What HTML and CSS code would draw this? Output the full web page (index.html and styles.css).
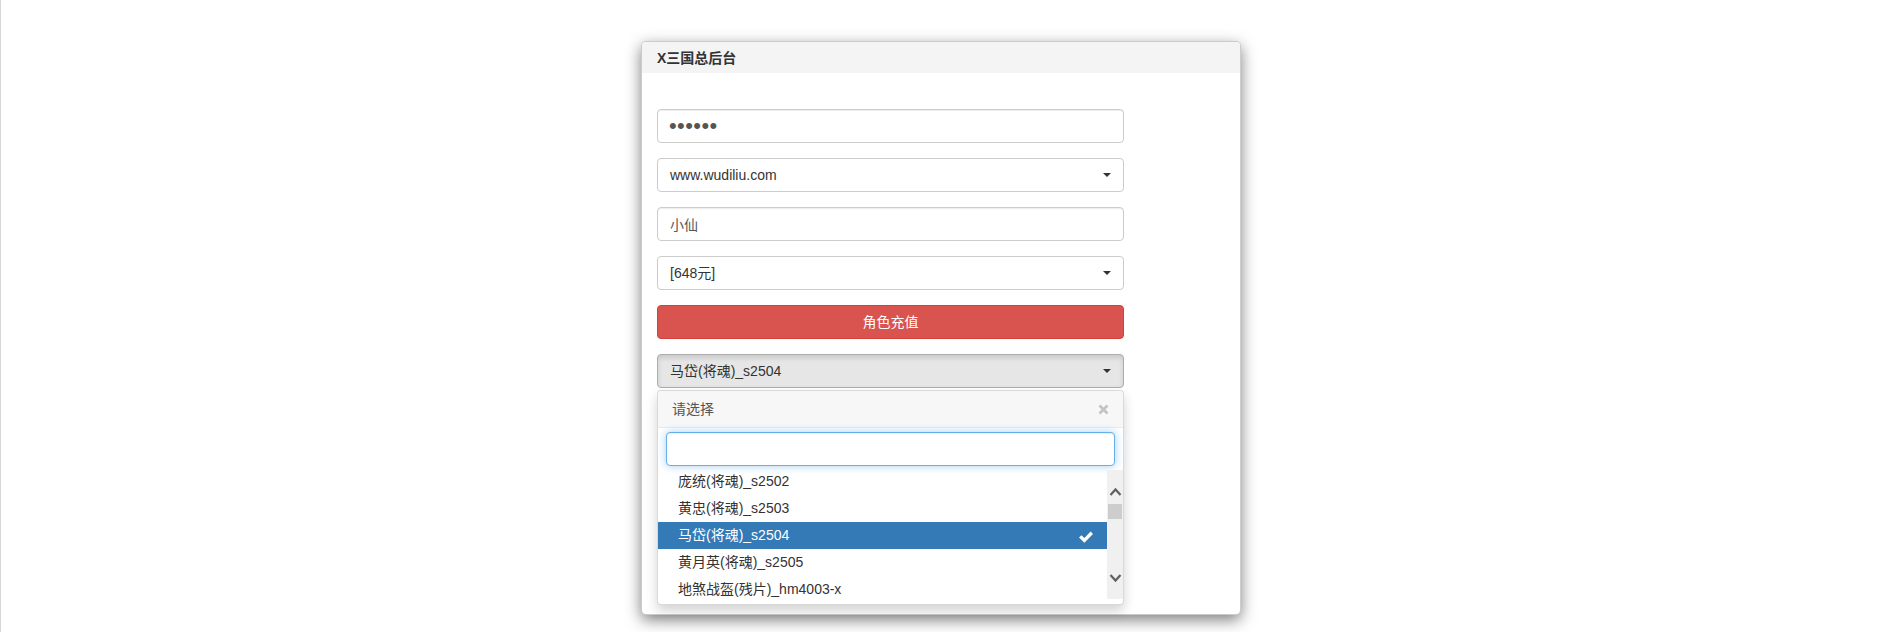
FILE: index.html
```html
<!DOCTYPE html>
<html lang="zh-CN">
<head>
<meta charset="utf-8">
<title>X三国总后台</title>
<link rel="stylesheet" href="styles.css">
</head>
<body>
<div class="panel">
  <div class="panel-heading">X三国总后台</div>
  <div class="panel-body">
    <form class="form">
      <div class="form-group"><input class="form-control pwd" type="password" value="123456"></div>
      <div class="form-group"><button type="button" class="select-btn"><span class="filter-option">www.wudiliu.com</span><span class="caret"></span></button></div>
      <div class="form-group"><input class="form-control" type="text" value="小仙"></div>
      <div class="form-group"><button type="button" class="select-btn"><span class="filter-option">[648元]</span><span class="caret"></span></button></div>
      <div class="form-group"><button type="button" class="btn btn-danger">角色充值</button></div>
      <div class="form-group select-open">
        <button type="button" class="select-btn active"><span class="filter-option">马岱(将魂)_s2504</span><span class="caret"></span></button>
        <div class="dropdown-menu">
          <div class="popover-title"><svg class="close" width="11" height="11" viewBox="0 0 11 11"><path d="M1.5 1.5 L9.5 9.5 M9.5 1.5 L1.5 9.5" stroke="#c3c3c3" stroke-width="2.6" fill="none"/></svg>请选择</div>
          <div class="bs-searchbox"><input class="form-control focused" type="text"></div>
          <div class="inner-wrap">
            <ul class="inner">
              <li class="first">庞统(将魂)_s2502</li>
              <li>黄忠(将魂)_s2503</li>
              <li class="selected">马岱(将魂)_s2504<svg class="check" width="14" height="12" viewBox="0 0 14 12"><polygon points="0,6.6 2.4,4.2 5.4,7.1 11.6,0.6 14,3 5.4,11.8" fill="#fff"/></svg></li>
              <li>黄月英(将魂)_s2505</li>
              <li>地煞战盔(残片)_hm4003-x</li>
            </ul>
            <svg class="scrollbar" width="16" height="129" viewBox="0 0 16 129">
              <rect width="16" height="129" fill="#f0f0f0"/>
              <polyline points="3.5,25 8.5,19.5 13.5,25" fill="none" stroke="#606060" stroke-width="2.2"/>
              <rect x="1" y="34" width="14" height="15" fill="#cdcdcd"/>
              <polyline points="3.5,105 8.5,110.5 13.5,105" fill="none" stroke="#606060" stroke-width="2.2"/>
            </svg>
          </div>
        </div>
      </div>
      <div class="form-group"><input class="form-control" type="text"></div>
      <div class="form-group"><button type="button" class="btn btn-primary" aria-label="查询"></button></div>
      <div class="form-group"><input class="form-control" type="text"></div>
      <div class="form-group"><button type="button" class="btn btn-primary" aria-label="提交"></button></div>
    </form>
  </div>
</div>
</body>
</html>
```

FILE: styles.css
```css
* { box-sizing: border-box; }

html, body {
  margin: 0;
  padding: 0;
  background: #fff;
}

body {
  border-left: 1px solid #d6d6d6;
  min-height: 100vh;
  overflow: hidden;
  font-family: "Liberation Sans", "Noto Sans CJK SC", sans-serif;
  font-size: 14px;
  line-height: 20px;
  color: #333;
}

.panel {
  width: 600px;
  margin: 41px auto 0;
  border: 1px solid rgba(0, 0, 0, 0.2);
  border-radius: 5px;
  background: #fff;
  box-shadow: 0 5px 15px rgba(0, 0, 0, 0.5);
}

.panel-heading {
  background: #f4f4f4;
  border-radius: 4px 4px 0 0;
  padding: 6px 15px 5px;
  font-weight: bold;
  color: #333;
}

.panel-body {
  padding: 36px 15px 15px;
}

.form { margin: 0; }

.form-group {
  width: 467px;
  margin-bottom: 15px;
  position: relative;
}

.form-control {
  display: block;
  width: 100%;
  height: 34px;
  padding: 6px 12px;
  border: 1px solid #ccc;
  border-radius: 4px;
  background: #fff;
  color: #555;
  font-family: "Liberation Sans", "Noto Sans CJK SC", sans-serif;
  font-size: 14px;
  line-height: 20px;
  box-shadow: inset 0 1px 1px rgba(0, 0, 0, 0.075);
  outline: none;
}

.form-control.pwd {
  font-size: 22px;
  letter-spacing: 0.4px;
  padding-left: 11px;
}

.select-btn {
  display: block;
  position: relative;
  width: 100%;
  height: 34px;
  padding: 6px 25px 6px 12px;
  border: 1px solid #ccc;
  border-radius: 4px;
  background: #fff;
  color: #333;
  text-align: left;
  font-family: "Liberation Sans", "Noto Sans CJK SC", sans-serif;
  font-size: 14px;
  line-height: 20px;
}

.select-btn.active {
  background: #e6e6e6;
  border-color: #adadad;
  box-shadow: inset 0 3px 5px rgba(0, 0, 0, 0.125);
}

.caret {
  position: absolute;
  right: 12px;
  top: 50%;
  margin-top: -2px;
  width: 0;
  height: 0;
  border-top: 4px solid #333;
  border-left: 4px solid transparent;
  border-right: 4px solid transparent;
}

.btn {
  display: block;
  height: 34px;
  padding: 6px 12px;
  border: 1px solid transparent;
  border-radius: 4px;
  font-family: "Liberation Sans", "Noto Sans CJK SC", sans-serif;
  font-size: 14px;
  line-height: 20px;
  color: #fff;
  text-align: center;
}

.btn-danger {
  width: 100%;
  background: #d9534f;
  border-color: #d43f3a;
}

.btn-primary {
  width: 60px;
  background: #337ab7;
  border-color: #2e6da4;
}

.dropdown-menu {
  position: absolute;
  top: 100%;
  left: 0;
  z-index: 10;
  width: 100%;
  margin-top: 2px;
  padding: 0 0 5px;
  background: #fff;
  border: 1px solid rgba(0, 0, 0, 0.15);
  border-radius: 4px;
  box-shadow: 0 6px 12px rgba(0, 0, 0, 0.175);
}

.popover-title {
  padding: 8px 14px;
  background: #f7f7f7;
  border-bottom: 1px solid #ebebeb;
  border-radius: 4px 4px 0 0;
  color: #555;
  line-height: 20px;
}

.close {
  float: right;
  display: block;
  margin-top: 5px;
  margin-right: 0;
}

.bs-searchbox {
  padding: 4px 8px;
}

.form-control.focused {
  border-color: #66afe9;
  box-shadow: inset 0 1px 1px rgba(0, 0, 0, 0.075), 0 0 8px rgba(102, 175, 233, 0.6);
}

.inner-wrap {
  display: flex;
  height: 129px;
}

.inner {
  flex: 1;
  margin: 0;
  padding: 0;
  list-style: none;
  overflow: hidden;
}

.inner li {
  position: relative;
  height: 27px;
  line-height: 27px;
  padding: 0 20px;
  color: #333;
  white-space: nowrap;
}

.inner li.first {
  margin-top: -2px;
}

.inner li.selected {
  background: #337ab7;
  color: #fff;
}

.check {
  position: absolute;
  right: 14px;
  top: 9px;
}

.scrollbar {
  display: block;
  flex: none;
}
```
